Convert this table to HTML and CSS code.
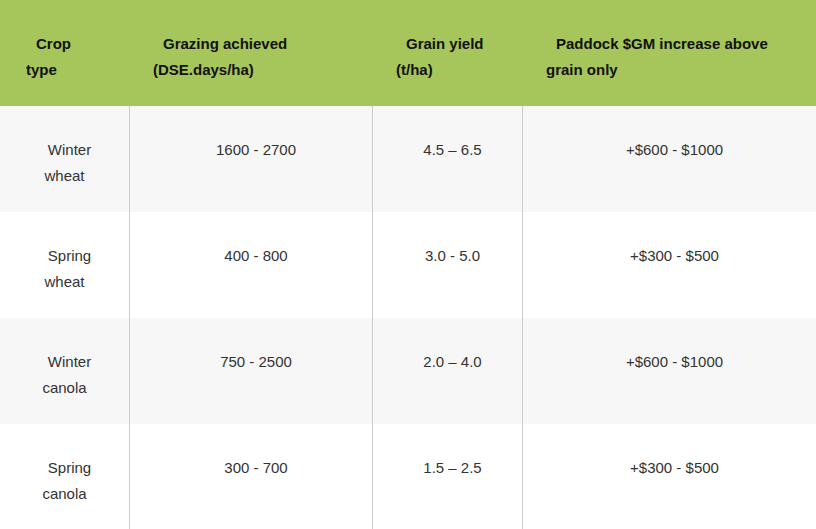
FILE: index.html
```html
<!DOCTYPE html>
<html>
<head>
<meta charset="utf-8">
<link rel="stylesheet" href="styles.css">
</head>
<body>
<table class="crop-table">
  <colgroup>
    <col class="c1"><col class="c2"><col class="c3"><col class="c4">
  </colgroup>
  <thead>
    <tr>
      <th class="first">Crop type</th>
      <th>Grazing achieved (DSE.days/ha)</th>
      <th>Grain yield (t/ha)</th>
      <th class="last">Paddock $GM increase above grain only</th>
    </tr>
  </thead>
  <tbody>
    <tr class="odd">
      <td class="first">Winter wheat</td>
      <td>1600 - 2700</td>
      <td>4.5 – 6.5</td>
      <td>+$600 - $1000</td>
    </tr>
    <tr>
      <td class="first">Spring wheat</td>
      <td>400 - 800</td>
      <td>3.0 - 5.0</td>
      <td>+$300 - $500</td>
    </tr>
    <tr class="odd">
      <td class="first">Winter canola</td>
      <td>750 - 2500</td>
      <td>2.0 – 4.0</td>
      <td>+$600 - $1000</td>
    </tr>
    <tr>
      <td class="first">Spring canola</td>
      <td>300 - 700</td>
      <td>1.5 – 2.5</td>
      <td>+$300 - $500</td>
    </tr>
  </tbody>
</table>
</body>
</html>
```
FILE: styles.css
```css
html, body {
  margin: 0;
  padding: 0;
  background: #fff;
}
.crop-table {
  width: 816px;
  table-layout: fixed;
  border-collapse: separate;
  border-spacing: 0;
  font-family: "Liberation Sans", Arial, sans-serif;
  font-size: 15px;
  line-height: 26px;
}
.c1 { width: 129px; }
.c2 { width: 243px; }
.c3 { width: 150px; }
.c4 { width: 294px; }
.crop-table th {
  background: #a6c55a;
  color: #111;
  font-weight: bold;
  text-align: left;
  vertical-align: top;
  padding: 31px 8px 23px 24px;
  text-indent: 10px;
  height: 52px;
}
.crop-table th.first {
  padding-left: 26px;
  padding-right: 40px;
}
.crop-table th.last {
  padding-right: 40px;
}
.crop-table td {
  color: #333;
  text-align: center;
  vertical-align: top;
  padding: 31px 0 23px;
  text-indent: 10px;
  height: 52px;
  border-left: 1px solid #cccccc;
}
.crop-table td.first {
  border-left: none;
  padding: 31px 20px 23px 20px;
}
.crop-table tr.odd td {
  background: #f7f7f7;
}
```
